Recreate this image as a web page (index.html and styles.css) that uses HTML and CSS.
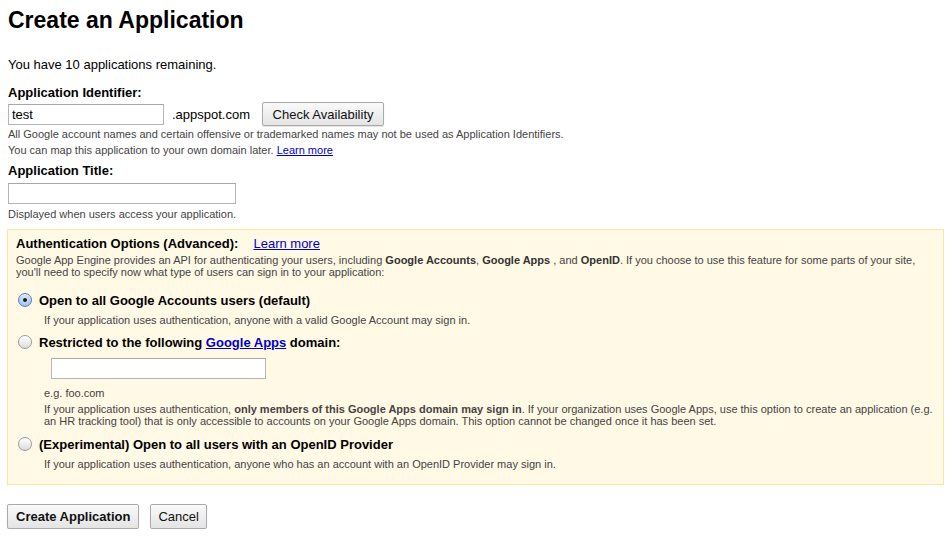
FILE: index.html
```html
<!DOCTYPE html>
<html>
<head>
<meta charset="utf-8">
<link rel="stylesheet" href="styles.css">
</head>
<body>
<h1 class="title">Create an Application</h1>
<p class="remaining">You have 10 applications remaining.</p>

<div class="field">
  <div class="label">Application Identifier:</div>
  <div class="row">
    <input class="text id-input" type="text" value="test">
    <span class="suffix">.appspot.com</span>
    <button class="btn check">Check Availability</button>
  </div>
  <div class="help">All Google account names and certain offensive or trademarked names may not be used as Application Identifiers.</div>
  <div class="help">You can map this application to your own domain later. <a href="#" class="link">Learn more</a></div>
</div>

<div class="field">
  <div class="label">Application Title:</div>
  <div class="row title-row">
    <input class="text title-input" type="text">
  </div>
  <div class="help">Displayed when users access your application.</div>
</div>

<div class="auth">
  <div class="auth-head">
    <span class="label">Authentication Options (Advanced):</span>
    <a href="#" class="link big">Learn more</a>
  </div>
  <div class="desc">Google App Engine provides an API for authenticating your users, including <b>Google Accounts</b>, <b>Google Apps</b> , and <b>OpenID</b>. If you choose to use this feature for some parts of your site, you'll need to specify now what type of users can sign in to your application:</div>

  <div class="option">
    <div class="opt-row">
      <span class="radio checked"></span>
      <span class="opt-label">Open to all Google Accounts users (default)</span>
    </div>
    <div class="opt-help">If your application uses authentication, anyone with a valid Google Account may sign in.</div>
  </div>

  <div class="option">
    <div class="opt-row">
      <span class="radio"></span>
      <span class="opt-label">Restricted to the following <a href="#" class="link">Google Apps</a> domain:</span>
    </div>
    <input class="text domain-input" type="text">
    <div class="opt-help eg">e.g. foo.com</div>
    <div class="opt-help">If your application uses authentication, <b>only members of this Google Apps domain may sign in</b>. If your organization uses Google Apps, use this option to create an application (e.g. an HR tracking tool) that is only accessible to accounts on your Google Apps domain. This option cannot be changed once it has been set.</div>
  </div>

  <div class="option">
    <div class="opt-row">
      <span class="radio"></span>
      <span class="opt-label">(Experimental) Open to all users with an OpenID Provider</span>
    </div>
    <div class="opt-help">If your application uses authentication, anyone who has an account with an OpenID Provider may sign in.</div>
  </div>
</div>

<div class="actions">
  <button class="btn primary">Create Application</button>
  <button class="btn cancel">Cancel</button>
</div>
</body>
</html>
```

FILE: styles.css
```css
html, body {
  margin: 0;
  padding: 0;
  background: #fff;
}
body {
  padding: 0 8px 0 7px;
  font-family: "Liberation Sans", Arial, sans-serif;
  font-size: 13px;
  color: #000;
}
.title {
  margin: 0;
  padding-top: 6px;
  font-size: 23px;
  line-height: 28px;
  font-weight: bold;
  padding-left: 1px;
}
.remaining {
  margin: 23px 0 0 1px;
  line-height: 16px;
}
.field {
  margin-left: 1px;
}
.label {
  font-weight: bold;
  font-size: 13px;
  line-height: 16px;
}
.remaining + .field {
  margin-top: 12px;
}
.field + .field {
  margin-top: 5px;
}
.row {
  display: flex;
  align-items: center;
  margin-top: 1px;
}
.title-row {
  margin-top: 2px;
}
.text {
  box-sizing: border-box;
  height: 21px;
  border: 1px solid #b5b5b5;
  border-top-color: #a8a8a8;
  background: #fff;
  font-family: "Liberation Sans", Arial, sans-serif;
  font-size: 13px;
  padding: 1px 3px;
  margin: 0;
  outline: none;
  color: #000;
}
.id-input { width: 156px; }
.title-input { width: 228px; margin-top: 2px; }
.suffix {
  margin-left: 8px;
  font-size: 13px;
}
.btn {
  box-sizing: border-box;
  height: 24px;
  padding: 0 8px;
  border: 1px solid #a9a9a9;
  border-radius: 2px;
  background: linear-gradient(#fafafa, #e4e4e4);
  font-family: "Liberation Sans", Arial, sans-serif;
  font-size: 13px;
  color: #111;
  white-space: nowrap;
  box-shadow: 0 1px 1px rgba(0,0,0,0.12);
}
.check {
  margin-left: 12px;
  width: 122px;
}
.help {
  font-size: 11px;
  line-height: 16px;
  color: #444;
}
.title-row + .help { margin-top: 2px; }
.link {
  color: #0000cc;
  text-decoration: underline;
}
.auth {
  margin-top: 7px;
  background: #fff9e5;
  border: 1px solid #f7e7a5;
  padding: 6px 4px 14px 8px;
}
.auth-head {
  display: flex;
  align-items: baseline;
  gap: 15px;
  line-height: 16px;
}
.link.big { font-size: 13px; }
.desc {
  font-size: 11px;
  line-height: 12px;
  color: #444;
  margin-top: 2px;
}
.desc b { color: #333; }
.option {
  margin-top: 14px;
}
.option + .option { margin-top: 8px; }
.option:last-child { margin-top: 9px; }
.opt-row {
  display: flex;
  align-items: center;
  gap: 7px;
  margin-left: 2px;
  height: 16px;
}
.opt-label {
  font-weight: bold;
  font-size: 13px;
}
.radio {
  box-sizing: border-box;
  width: 14px;
  height: 14px;
  border-radius: 50%;
  border: 1px solid #9a9a9a;
  background: linear-gradient(#ffffff, #dcdcdc);
  flex: none;
  position: relative;
  box-shadow: inset 0 1px 1px rgba(255,255,255,0.8);
}
.radio.checked {
  border-color: #5c7ea6;
  background: radial-gradient(circle at 50% 35%, #d9ecff, #8db8ea);
}
.radio.checked::after {
  content: "";
  position: absolute;
  left: 4px;
  top: 4px;
  width: 4px;
  height: 4px;
  border-radius: 50%;
  background: #1a1a1a;
}
.opt-help {
  margin-left: 28px;
  font-size: 11px;
  line-height: 12px;
  color: #444;
  margin-top: 6px;
}
.opt-help b { color: #444; }
.domain-input {
  display: block;
  margin: 8px 0 0 35px;
  width: 215px;
}
.opt-help.eg { margin-top: 8px; }
.eg + .opt-help { margin-top: 4px; }
.actions {
  display: flex;
  gap: 12px;
  margin-top: 19px;
}
.actions .btn {
  height: 25px;
  padding: 0 8px;
}
.btn.primary {
  font-weight: bold;
}
.actions .btn.cancel {
  margin-left: -1px;
  padding: 0 7px;
}
```
